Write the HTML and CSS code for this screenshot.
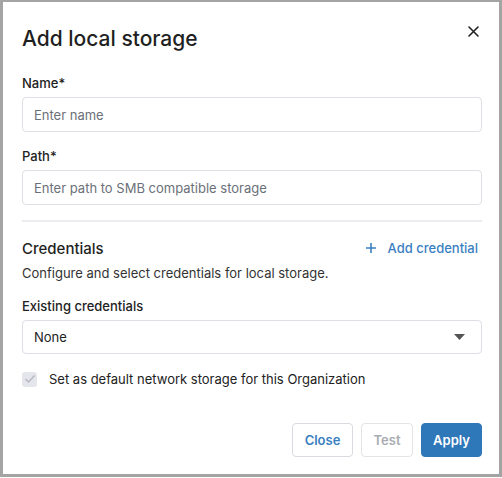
FILE: index.html
```html
<!DOCTYPE html>
<html>
<head>
<meta charset="utf-8">
<link rel="stylesheet" href="styles.css">
</head>
<body>
<div class="frame">
  <div class="dialog">
    <div class="header">
      <h1 class="title">Add local storage</h1>
      <button class="close" aria-label="Close">
        <svg width="11" height="11" viewBox="0 0 11 11"><path d="M1 1L10 10M10 1L1 10" stroke="#222" stroke-width="1.6" stroke-linecap="round"/></svg>
      </button>
    </div>
    <div class="field">
      <label class="label">Name*</label>
      <div class="input"><span class="placeholder">Enter name</span></div>
    </div>
    <div class="field">
      <label class="label">Path*</label>
      <div class="input"><span class="placeholder">Enter path to SMB compatible storage</span></div>
    </div>
    <div class="divider"></div>
    <div class="cred-head">
      <h2 class="subtitle">Credentials</h2>
      <a class="add-link">
        <svg width="12" height="12" viewBox="0 0 12 12"><path d="M6 1V11M1 6H11" stroke="#3a7fc1" stroke-width="1.6"/></svg>
        <span>Add credential</span>
      </a>
    </div>
    <p class="desc">Configure and select credentials for local storage.</p>
    <div class="field">
      <label class="label">Existing credentials</label>
      <div class="input select"><span class="value">None</span>
        <svg width="11" height="6" viewBox="0 0 11 6"><path d="M0 0H11L5.5 6Z" fill="#555"/></svg>
      </div>
    </div>
    <div class="check-row">
      <span class="checkbox">
        <svg width="12" height="10" viewBox="0 0 12 10"><path d="M1.5 5L4.5 8L10.5 1.5" stroke="#b4b9c2" stroke-width="1.5" fill="none"/></svg>
      </span>
      <span class="check-label">Set as default network storage for this Organization</span>
    </div>
    <div class="footer">
      <button class="btn btn-outline">Close</button>
      <button class="btn btn-disabled">Test</button>
      <button class="btn btn-primary">Apply</button>
    </div>
  </div>
</div>
</body>
</html>
```
FILE: styles.css
```css
* { box-sizing: border-box; }
html, body { margin: 0; padding: 0; background: #fff; }
body { font-family: Inter, "Noto Sans", sans-serif; color: #222; }
.frame {
  width: 502px;
  height: 477px;
  border-style: solid;
  border-color: #a4a4a4;
  border-width: 2px 3px 3px 3px;
  background: #fff;
}
.dialog { padding: 0 17px 0 19px; display: flex; flex-direction: column; }
.header { display: flex; justify-content: space-between; align-items: center; height: 72px; }
.title { margin: 0; font-size: 21px; font-weight: 500; color: #1f1f1f; }
.close { border: 0; background: none; padding: 0; margin-right: 3px; margin-top: -14px; display: flex; }
.field { display: flex; flex-direction: column; }
.label { font-size: 13px; font-weight: 500; line-height: 18px; margin-bottom: 5px; color: #222; }
.input {
  height: 35px;
  border: 1px solid #dcdfe4;
  border-radius: 4px;
  display: flex;
  align-items: center;
  padding: 0 11px;
  font-size: 13px;
  margin-bottom: 15px;
}
.placeholder { color: #6b7079; }
.value { color: #222; flex: 1; }
.select { height: 34px; padding-right: 16px; margin-bottom: 15px; }
.divider { height: 2px; background: #ebecef; margin-bottom: 15px; }
.cred-head { display: flex; justify-content: space-between; align-items: center; height: 22px; }
.subtitle { margin: 0; font-size: 15px; font-weight: 500; color: #1f1f1f; }
.add-link { display: flex; align-items: center; gap: 11px; color: #3a7fc1; font-size: 13px; font-weight: 500; margin-right: 4px; }
.desc { margin: 5px 0 15px; font-size: 13px; line-height: 18px; color: #333; }
.check-row { display: flex; align-items: center; gap: 12px; height: 20px; }
.checkbox {
  width: 15px; height: 15px; border-radius: 3px; background: #e4e6eb;
  display: flex; align-items: center; justify-content: center;
}
.check-label { font-size: 13px; color: #222; }
.footer { display: flex; justify-content: flex-end; gap: 8px; margin-top: 34px; }
.btn {
  height: 34px; border-radius: 4px; font-family: inherit; font-size: 13px; font-weight: 600;
  padding: 0 10px; background: #fff; cursor: pointer;
}
.btn-outline { border: 1px solid #d8dbe0; color: #3a7fc1; width: 61px; }
.btn-disabled { border: 1px solid #e2e4e8; color: #a9acb2; width: 52px; }
.btn-primary { border: 1px solid #2e77b9; background: #2e77b9; color: #fff; width: 61px; }
```
